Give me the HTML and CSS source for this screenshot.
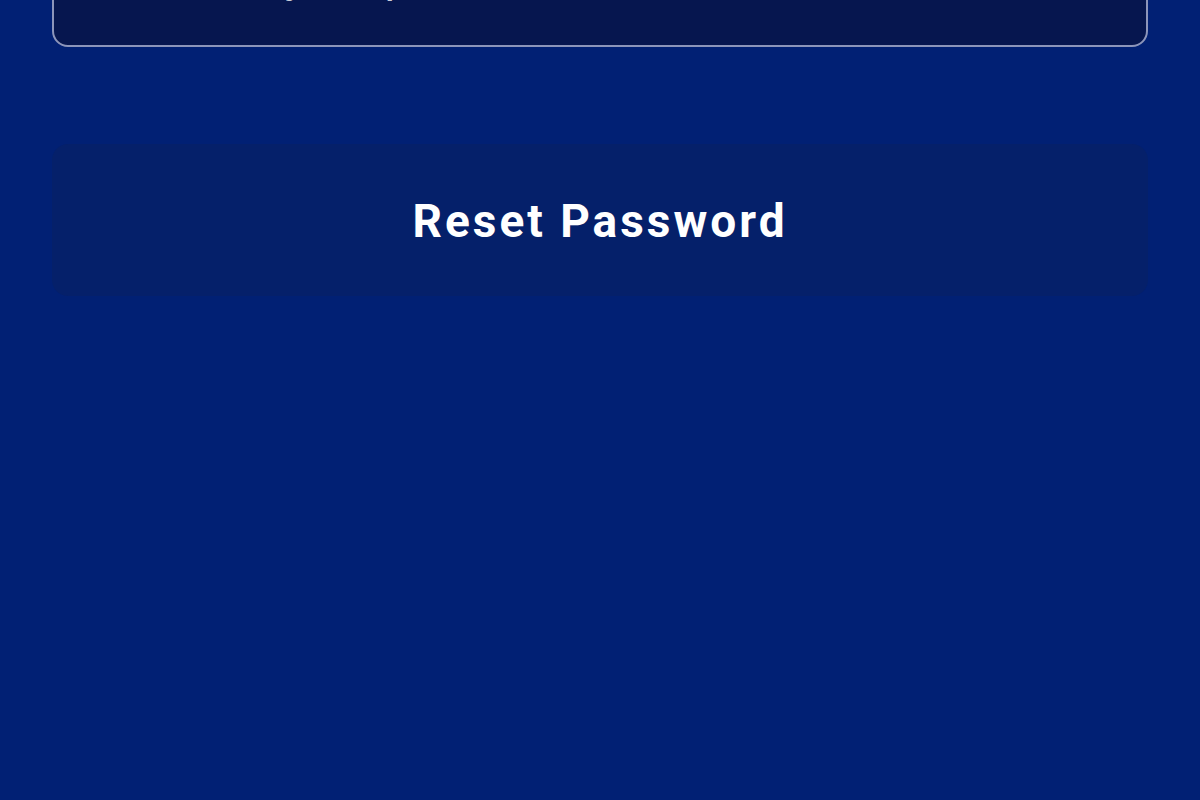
FILE: index.html
```html
<!DOCTYPE html>
<html lang="en">
<head>
<meta charset="utf-8">
<title>Reset Password</title>
<link rel="stylesheet" href="styles.css">
</head>
<body>
<main class="page">
  <form class="form">
    <input class="field" type="password" placeholder="Confirm your password">
    <button class="submit" type="button">Reset Password</button>
  </form>
</main>
</body>
</html>
```

FILE: styles.css
```css
html, body {
  margin: 0;
  padding: 0;
  background: #012074;
  height: 100%;
  overflow: hidden;
}

.page {
  padding: 0 52px;
  font-family: Roboto, "Liberation Sans", sans-serif;
}

.form {
  display: flex;
  flex-direction: column;
  gap: 97px;
  margin-top: -105px;
}

.field {
  box-sizing: border-box;
  width: 100%;
  height: 152px;
  border: 2px solid #8c95ba;
  border-radius: 16px;
  background: #06164f;
  color: #ffffff;
  font-family: Roboto, "Liberation Sans", sans-serif;
  font-size: 46px;
  padding: 9px 44px 0 56px;
  outline: none;
}

.field::placeholder {
  color: #c9cdda;
  opacity: 1;
}

.submit {
  box-sizing: border-box;
  width: 100%;
  height: 152px;
  border: none;
  border-radius: 16px;
  background: #05206a;
  color: #ffffff;
  font-family: Roboto, "Liberation Sans", sans-serif;
  font-weight: 700;
  font-size: 46px;
  letter-spacing: 3px;
  padding-top: 2px;
  cursor: pointer;
}
```
